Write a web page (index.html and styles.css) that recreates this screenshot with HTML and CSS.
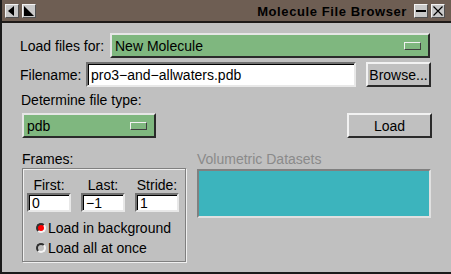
FILE: index.html
```html
<!DOCTYPE html>
<html>
<head>
<meta charset="utf-8">
<link rel="stylesheet" href="styles.css">
</head>
<body>
<div class="win">
  <div class="titlebar">
    <span class="tbtn"><svg width="10" height="10" viewBox="0 0 10 10"><polygon points="7,0 7,10 1,5" fill="#000"/></svg></span>
    <span class="tbtn"><svg width="10" height="10" viewBox="0 0 10 10"><polygon points="0,0 10,10 0,10" fill="#000"/></svg></span>
    <div class="title">Molecule File Browser</div>
    <span class="tbtn"><svg width="10" height="10" viewBox="0 0 10 10"><rect x="0" y="4" width="10" height="2" fill="#000"/></svg></span>
    <span class="tbtn"><svg width="10" height="10" viewBox="0 0 10 10"><path d="M0.5 0.5 L9.5 9.5 M9.5 0.5 L0.5 9.5" stroke="#000" stroke-width="1.2"/></svg></span>
  </div>
  <div class="content">
    <div class="row r1">
      <span class="lbl l1">Load files for:</span>
      <div class="menubtn wide"><span>New Molecule</span><span class="ind"></span></div>
    </div>
    <div class="row r2">
      <span class="lbl l2">Filename:</span>
      <div class="entry fname">pro3−and−allwaters.pdb</div>
      <div class="btn browse">Browse...</div>
    </div>
    <div class="lbl typelbl">Determine file type:</div>
    <div class="row r4">
      <div class="menubtn type"><span>pdb</span><span class="ind"></span></div>
      <div class="btn load">Load</div>
    </div>
    <div class="lower">
      <div class="frames">
        <div class="lbl">Frames:</div>
        <div class="fbox">
          <div class="fgrid">
            <div class="fcol"><span class="lbl">First:</span><div class="entry small">0</div></div>
            <div class="fcol"><span class="lbl">Last:</span><div class="entry small">−1</div></div>
            <div class="fcol"><span class="lbl">Stride:</span><div class="entry small">1</div></div>
          </div>
          <div class="radio first"><span class="dot on"></span><span class="lbl">Load in background</span></div>
          <div class="radio"><span class="dot"></span><span class="lbl">Load all at once</span></div>
        </div>
      </div>
      <div class="vol">
        <div class="vlbl">Volumetric Datasets</div>
        <div class="vbox"></div>
      </div>
    </div>
  </div>
</div>
</body>
</html>
```
FILE: styles.css
```css
* { box-sizing: border-box; }
html, body { margin: 0; padding: 0; background: #c0c0c0; }
body { font-family: "Liberation Sans", Arial, sans-serif; font-size: 14px; color: #000; }
.win {
  width: 451px; height: 274px;
  border-left: 2px solid #1a1a1a;
  border-bottom: 2px solid #1a1a1a;
  background: #c0c0c0;
  display: flex; flex-direction: column;
  overflow: hidden;
}
.titlebar {
  height: 23px;
  background: #6e5e53;
  border-bottom: 2px solid #1e1a18;
  display: flex; align-items: flex-start;
  padding: 4px 6px 0 3px;
  gap: 3px;
}
.tbtn {
  width: 14px; height: 14px;
  background: #c8c8c8;
  border-top: 1px solid #f4f4f4; border-left: 1px solid #f4f4f4;
  border-right: 1px solid #505050; border-bottom: 1px solid #505050;
  display: flex; align-items: center; justify-content: center;
}
.title {
  flex: 1;
  text-align: right;
  font-weight: bold;
  font-size: 13px;
  letter-spacing: 0.6px;
  line-height: 15px;
  padding-right: 4px;
  color: #000;
}
.content {
  flex: 1;
  padding: 10px 20px 0 18px;
  display: flex; flex-direction: column;
}
.row { display: flex; align-items: center; height: 25px; }
.lbl { line-height: 16px; white-space: nowrap; }
.l1 { width: 90px; }
.l2 { width: 66px; }
.r2 { margin-top: 4px; }
.menubtn {
  height: 25px;
  background: #7fb77f;
  border-top: 2px solid #e6e6e6; border-left: 2px solid #e6e6e6;
  border-right: 2px solid #2a2a2a; border-bottom: 2px solid #2a2a2a;
  display: flex; align-items: center; justify-content: space-between;
  padding: 0 7px 0 3px;
}
.ind {
  width: 17px; height: 8px;
  border-top: 1px solid #f2f2f2; border-left: 1px solid #f2f2f2;
  border-right: 1px solid #404040; border-bottom: 1px solid #404040;
  background: #7fb77f;
}
.wide { width: 320px; }
.entry {
  background: #fff;
  border-top: 2px solid #707070; border-left: 2px solid #707070;
  border-right: 2px solid #e8e8e8; border-bottom: 2px solid #e8e8e8;
  box-shadow: inset 1px 1px 0 #000;
  padding-left: 3px;
  display: flex; align-items: center;
}
.fname { width: 270px; height: 25px; }
.btn {
  height: 25px;
  border-top: 2px solid #f2f2f2; border-left: 2px solid #f2f2f2;
  border-right: 2px solid #2a2a2a; border-bottom: 2px solid #2a2a2a;
  display: flex; align-items: center; justify-content: center;
  background: #c0c0c0;
}
.browse { width: 65px; margin-left: 10px; }
.typelbl { margin: 5px 0 0 1px; }
.r4 { margin: 5px 0 0 2px; justify-content: space-between; }
.type { width: 134px; }
.load { width: 85px; margin-right: -1px; }
.lower { display: flex; margin: 13px 0 0 2px; gap: 11px; }
.frames { display: flex; flex-direction: column; }
.fbox {
  margin-top: 1px;
  width: 164px; height: 94px;
  border: 1px solid #808080;
  box-shadow: inset 1px 1px 0 #f0f0f0, 1px 1px 0 #f0f0f0;
  padding: 8px 0 0 4px;
}
.fgrid { display: flex; gap: 10px; }
.fcol { display: flex; flex-direction: column; align-items: center; width: 44px; }
.small { width: 44px; height: 19px; }
.radio { display: flex; align-items: center; height: 20px; padding-left: 9px; }
.radio.first { margin-top: 6px; }
.dot {
  width: 10px; height: 10px; border-radius: 50%;
  border-top: 2px solid #303030; border-left: 2px solid #303030;
  border-right: 2px solid #f4f4f4; border-bottom: 2px solid #f4f4f4;
  background: #c0c0c0;
  margin-right: 2px;
}
.dot.on { background: #ff0000; }
.vol { display: flex; flex-direction: column; }
.vlbl { color: #8a8a8a; line-height: 16px; }
.vbox {
  margin-top: 2px;
  width: 234px; height: 49px;
  background: #3cb4bd;
  border-top: 2px solid #808080; border-left: 2px solid #808080;
  border-right: 2px solid #e0e0e0; border-bottom: 2px solid #e0e0e0;
}
```
